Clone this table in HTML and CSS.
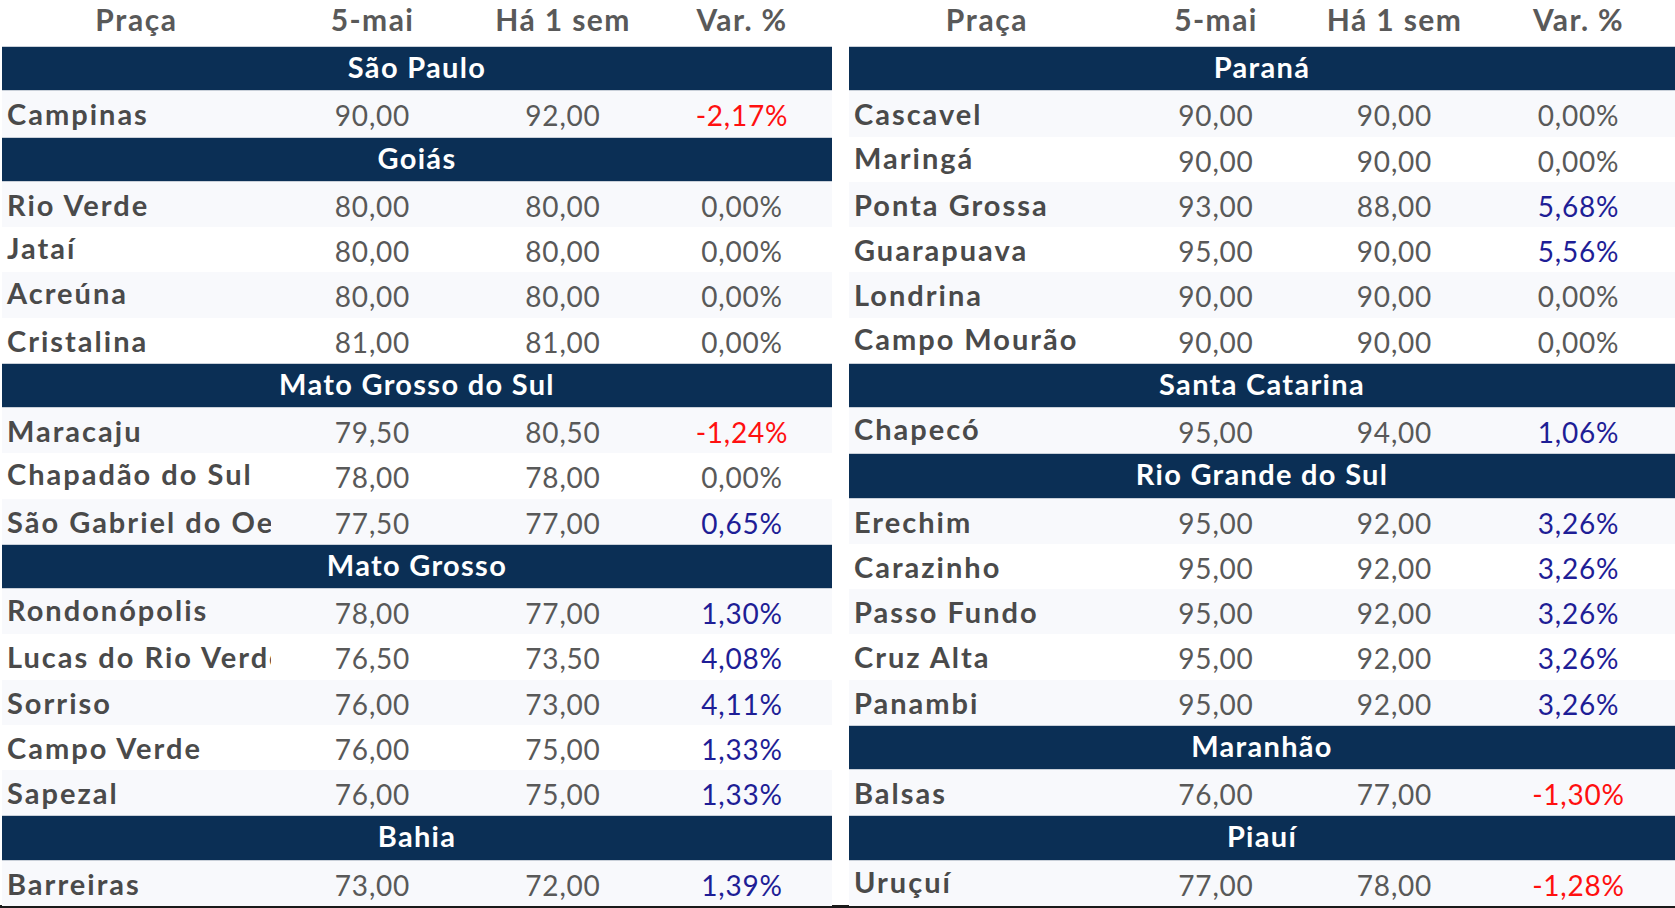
FILE: index.html
```html
<!DOCTYPE html>
<html lang="pt-BR">
<head>
<meta charset="utf-8">
<title>Preços</title>
<link rel="stylesheet" href="styles.css">
</head>
<body>
<div class="page">
  <div class="tables">
    <div class="table left">
      <div class="row head"><div class="c name">Praça</div><div class="c">5-mai</div><div class="c">Há 1 sem</div><div class="c">Var. %</div></div>
      <div class="band">São Paulo</div>
      <div class="row alt"><div class="c name">Campinas</div><div class="c">90,00</div><div class="c">92,00</div><div class="c neg">-2,17%</div></div>
      <div class="band">Goiás</div>
      <div class="row alt"><div class="c name">Rio Verde</div><div class="c">80,00</div><div class="c">80,00</div><div class="c">0,00%</div></div>
      <div class="row"><div class="c name up">Jataí</div><div class="c">80,00</div><div class="c">80,00</div><div class="c">0,00%</div></div>
      <div class="row alt"><div class="c name up">Acreúna</div><div class="c">80,00</div><div class="c">80,00</div><div class="c">0,00%</div></div>
      <div class="row"><div class="c name">Cristalina</div><div class="c">81,00</div><div class="c">81,00</div><div class="c">0,00%</div></div>
      <div class="band">Mato Grosso do Sul</div>
      <div class="row alt"><div class="c name">Maracaju</div><div class="c">79,50</div><div class="c">80,50</div><div class="c neg">-1,24%</div></div>
      <div class="row"><div class="c name up">Chapadão do Sul</div><div class="c">78,00</div><div class="c">78,00</div><div class="c">0,00%</div></div>
      <div class="row alt"><div class="c name">São Gabriel do Oeste</div><div class="c">77,50</div><div class="c">77,00</div><div class="c pos">0,65%</div></div>
      <div class="band">Mato Grosso</div>
      <div class="row alt"><div class="c name up">Rondonópolis</div><div class="c">78,00</div><div class="c">77,00</div><div class="c pos">1,30%</div></div>
      <div class="row"><div class="c name">Lucas do Rio Verde</div><div class="c">76,50</div><div class="c">73,50</div><div class="c pos">4,08%</div></div>
      <div class="row alt"><div class="c name">Sorriso</div><div class="c">76,00</div><div class="c">73,00</div><div class="c pos">4,11%</div></div>
      <div class="row"><div class="c name">Campo Verde</div><div class="c">76,00</div><div class="c">75,00</div><div class="c pos">1,33%</div></div>
      <div class="row alt"><div class="c name">Sapezal</div><div class="c">76,00</div><div class="c">75,00</div><div class="c pos">1,33%</div></div>
      <div class="band">Bahia</div>
      <div class="row alt"><div class="c name">Barreiras</div><div class="c">73,00</div><div class="c">72,00</div><div class="c pos">1,39%</div></div>
    </div>
    <div class="table right">
      <div class="row head"><div class="c name">Praça</div><div class="c">5-mai</div><div class="c">Há 1 sem</div><div class="c">Var. %</div></div>
      <div class="band">Paraná</div>
      <div class="row alt"><div class="c name">Cascavel</div><div class="c">90,00</div><div class="c">90,00</div><div class="c">0,00%</div></div>
      <div class="row"><div class="c name up">Maringá</div><div class="c">90,00</div><div class="c">90,00</div><div class="c">0,00%</div></div>
      <div class="row alt"><div class="c name">Ponta Grossa</div><div class="c">93,00</div><div class="c">88,00</div><div class="c pos">5,68%</div></div>
      <div class="row"><div class="c name">Guarapuava</div><div class="c">95,00</div><div class="c">90,00</div><div class="c pos">5,56%</div></div>
      <div class="row alt"><div class="c name">Londrina</div><div class="c">90,00</div><div class="c">90,00</div><div class="c">0,00%</div></div>
      <div class="row"><div class="c name up">Campo Mourão</div><div class="c">90,00</div><div class="c">90,00</div><div class="c">0,00%</div></div>
      <div class="band">Santa Catarina</div>
      <div class="row alt"><div class="c name up">Chapecó</div><div class="c">95,00</div><div class="c">94,00</div><div class="c pos">1,06%</div></div>
      <div class="band">Rio Grande do Sul</div>
      <div class="row alt"><div class="c name">Erechim</div><div class="c">95,00</div><div class="c">92,00</div><div class="c pos">3,26%</div></div>
      <div class="row"><div class="c name">Carazinho</div><div class="c">95,00</div><div class="c">92,00</div><div class="c pos">3,26%</div></div>
      <div class="row alt"><div class="c name">Passo Fundo</div><div class="c">95,00</div><div class="c">92,00</div><div class="c pos">3,26%</div></div>
      <div class="row"><div class="c name">Cruz Alta</div><div class="c">95,00</div><div class="c">92,00</div><div class="c pos">3,26%</div></div>
      <div class="row alt"><div class="c name">Panambi</div><div class="c">95,00</div><div class="c">92,00</div><div class="c pos">3,26%</div></div>
      <div class="band">Maranhão</div>
      <div class="row alt"><div class="c name">Balsas</div><div class="c">76,00</div><div class="c">77,00</div><div class="c neg">-1,30%</div></div>
      <div class="band">Piauí</div>
      <div class="row alt"><div class="c name up">Uruçuí</div><div class="c">77,00</div><div class="c">78,00</div><div class="c neg">-1,28%</div></div>
    </div>
  </div>
</div>
</body>
</html>
```
FILE: styles.css
```css
* { box-sizing: border-box; }
html, body { margin: 0; padding: 0; background: #ffffff; }
body {
  width: 1675px;
  height: 908px;
  overflow: hidden;
  font-family: "Lato", "Liberation Sans", sans-serif;
}
.page {
  width: 1675px;
  height: 908px;
  border-bottom: 3px solid #1a1a1a;
}
.tables {
  display: flex;
  gap: 17px;
  padding-left: 2px;
}
.table { display: flex; flex-direction: column; }
.table.left { width: 830px; }
.table.right { width: 826px; }
.row {
  display: grid;
  height: 45.25px;
  align-items: center;
  background: #ffffff;
  font-size: 28px;
  color: #595959;
  letter-spacing: 0.8px;
}
.left .row { grid-template-columns: 269px 203px 178px 180px; }
.right .row { grid-template-columns: 276px 182px 175px 193px; }
.row.alt { background: #f8f9fc; }
.c {
  text-align: center;
  white-space: nowrap;
  overflow: hidden;
  padding-top: 3px;
}
.c.name {
  text-align: left;
  padding-left: 5px;
  padding-top: 0;
  font-size: 29px;
  font-weight: 700;
  color: #4a4a4a;
  letter-spacing: 2px;
}
.c.name.up { padding-bottom: 4px; }
.row.head {
  height: 46px;
  background: #ffffff;
  font-size: 30px;
  font-weight: 700;
  color: #595959;
  align-items: start;
  letter-spacing: 1.4px;
}
.row.head .c { padding-top: 1px; }
.row.head .c.name { text-align: center; padding-left: 0; font-size: 30px; color: #595959; letter-spacing: 1.6px; }
.neg { color: #ff1010; }
.pos { color: #1e1e96; }
.band {
  height: 45.25px;
  background: #0b2f55;
  border-top: 1px solid #c9d0d9;
  border-bottom: 1px solid #c9d0d9;
  color: #ffffff;
  font-size: 29px;
  font-weight: 700;
  letter-spacing: 1.3px;
  text-align: center;
  display: flex;
  align-items: center;
  justify-content: center;
  padding-bottom: 4px;
}
```
